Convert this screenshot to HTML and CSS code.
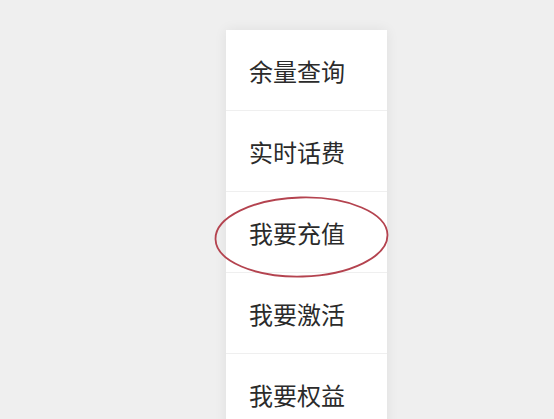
FILE: index.html
```html
<!DOCTYPE html>
<html lang="zh">
<head>
<meta charset="utf-8">
<link rel="stylesheet" href="styles.css">
</head>
<body>
<div class="page">
  <ul class="menu">
    <li class="item">余量查询</li>
    <li class="item">实时话费</li>
    <li class="item marked">我要充值
      <svg class="ring" width="177" height="84" viewBox="0 0 177 84"><ellipse cx="88.5" cy="42" rx="86" ry="39.5" fill="none" stroke="#b4434f" stroke-width="1.8" transform="rotate(-1.5 88.5 42)"/></svg>
    </li>
    <li class="item">我要激活</li>
    <li class="item">我要权益</li>
  </ul>
</div>
</body>
</html>
```
FILE: styles.css
```css
html, body {
  margin: 0;
  padding: 0;
  background: #efefef;
  overflow: hidden;
}
.page {
  width: 554px;
  height: 419px;
  padding-top: 30px;
  padding-left: 226px;
  box-sizing: border-box;
}
.menu {
  list-style: none;
  margin: 0;
  padding: 0;
  width: 161px;
  background: #ffffff;
  box-shadow: 0 0 12px rgba(0,0,0,0.07);
}
.item {
  position: relative;
  height: 81px;
  box-sizing: border-box;
  padding-left: 23px;
  display: flex;
  align-items: center;
  font-family: "Noto Sans CJK SC", "Noto Sans", sans-serif;
  font-size: 24px;
  font-weight: 400;
  color: #2b2b2b;
  border-bottom: 1px solid #efefef;
}
.ring {
  position: absolute;
  left: -13px;
  top: 3px;
}
```
